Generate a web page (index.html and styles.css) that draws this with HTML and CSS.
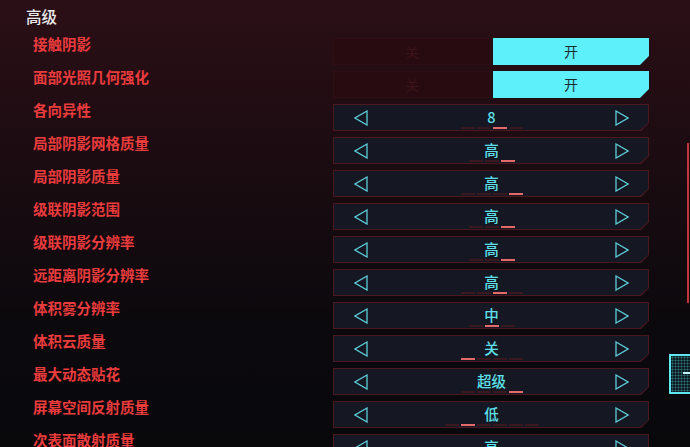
FILE: index.html
```html
<!DOCTYPE html>
<html lang="zh-CN">
<head>
<meta charset="utf-8">
<link rel="stylesheet" href="styles.css">
</head>
<body>
<div class="page">
  <h1 class="title">高级</h1>
  <div class="rows">
    <div class="row">
      <div class="label">接触阴影</div>
      <div class="toggle"><div class="off">关</div><div class="on">开</div></div>
    </div>
    <div class="row">
      <div class="label">面部光照几何强化</div>
      <div class="toggle"><div class="off">关</div><div class="on">开</div></div>
    </div>
    <div class="row">
      <div class="label">各向异性</div>
      <div class="sel"><div class="sel-in">
        <svg class="arr" viewBox="0 0 14 16"><polygon points="13,1 1,8 13,15" /></svg>
        <div class="mid"><div class="val">8</div><div class="bar"><i></i><i></i><i class="on"></i><i></i></div></div>
        <svg class="arr" viewBox="0 0 14 16"><polygon points="1,1 13,8 1,15" /></svg>
      </div></div>
    </div>
    <div class="row">
      <div class="label">局部阴影网格质量</div>
      <div class="sel"><div class="sel-in">
        <svg class="arr" viewBox="0 0 14 16"><polygon points="13,1 1,8 13,15" /></svg>
        <div class="mid"><div class="val">高</div><div class="bar"><i></i><i></i><i class="on"></i></div></div>
        <svg class="arr" viewBox="0 0 14 16"><polygon points="1,1 13,8 1,15" /></svg>
      </div></div>
    </div>
    <div class="row">
      <div class="label">局部阴影质量</div>
      <div class="sel"><div class="sel-in">
        <svg class="arr" viewBox="0 0 14 16"><polygon points="13,1 1,8 13,15" /></svg>
        <div class="mid"><div class="val">高</div><div class="bar"><i></i><i></i><i></i><i class="on"></i></div></div>
        <svg class="arr" viewBox="0 0 14 16"><polygon points="1,1 13,8 1,15" /></svg>
      </div></div>
    </div>
    <div class="row">
      <div class="label">级联阴影范围</div>
      <div class="sel"><div class="sel-in">
        <svg class="arr" viewBox="0 0 14 16"><polygon points="13,1 1,8 13,15" /></svg>
        <div class="mid"><div class="val">高</div><div class="bar"><i></i><i></i><i class="on"></i></div></div>
        <svg class="arr" viewBox="0 0 14 16"><polygon points="1,1 13,8 1,15" /></svg>
      </div></div>
    </div>
    <div class="row">
      <div class="label">级联阴影分辨率</div>
      <div class="sel"><div class="sel-in">
        <svg class="arr" viewBox="0 0 14 16"><polygon points="13,1 1,8 13,15" /></svg>
        <div class="mid"><div class="val">高</div><div class="bar"><i></i><i></i><i class="on"></i></div></div>
        <svg class="arr" viewBox="0 0 14 16"><polygon points="1,1 13,8 1,15" /></svg>
      </div></div>
    </div>
    <div class="row">
      <div class="label">远距离阴影分辨率</div>
      <div class="sel"><div class="sel-in">
        <svg class="arr" viewBox="0 0 14 16"><polygon points="13,1 1,8 13,15" /></svg>
        <div class="mid"><div class="val">高</div><div class="bar"><i></i><i></i><i class="on"></i><i></i></div></div>
        <svg class="arr" viewBox="0 0 14 16"><polygon points="1,1 13,8 1,15" /></svg>
      </div></div>
    </div>
    <div class="row">
      <div class="label">体积雾分辨率</div>
      <div class="sel"><div class="sel-in">
        <svg class="arr" viewBox="0 0 14 16"><polygon points="13,1 1,8 13,15" /></svg>
        <div class="mid"><div class="val">中</div><div class="bar"><i></i><i class="on"></i><i></i></div></div>
        <svg class="arr" viewBox="0 0 14 16"><polygon points="1,1 13,8 1,15" /></svg>
      </div></div>
    </div>
    <div class="row">
      <div class="label">体积云质量</div>
      <div class="sel"><div class="sel-in">
        <svg class="arr" viewBox="0 0 14 16"><polygon points="13,1 1,8 13,15" /></svg>
        <div class="mid"><div class="val">关</div><div class="bar"><i class="on"></i><i></i><i></i><i></i></div></div>
        <svg class="arr" viewBox="0 0 14 16"><polygon points="1,1 13,8 1,15" /></svg>
      </div></div>
    </div>
    <div class="row">
      <div class="label">最大动态贴花</div>
      <div class="sel"><div class="sel-in">
        <svg class="arr" viewBox="0 0 14 16"><polygon points="13,1 1,8 13,15" /></svg>
        <div class="mid"><div class="val">超级</div><div class="bar"><i></i><i></i><i></i><i class="on"></i></div></div>
        <svg class="arr" viewBox="0 0 14 16"><polygon points="1,1 13,8 1,15" /></svg>
      </div></div>
    </div>
    <div class="row">
      <div class="label">屏幕空间反射质量</div>
      <div class="sel"><div class="sel-in">
        <svg class="arr" viewBox="0 0 14 16"><polygon points="13,1 1,8 13,15" /></svg>
        <div class="mid"><div class="val">低</div><div class="bar"><i></i><i class="on"></i><i></i><i></i><i></i><i></i></div></div>
        <svg class="arr" viewBox="0 0 14 16"><polygon points="1,1 13,8 1,15" /></svg>
      </div></div>
    </div>
    <div class="row">
      <div class="label">次表面散射质量</div>
      <div class="sel"><div class="sel-in">
        <svg class="arr" viewBox="0 0 14 16"><polygon points="13,1 1,8 13,15" /></svg>
        <div class="mid"><div class="val">高</div><div class="bar"><i></i><i></i><i class="on"></i></div></div>
        <svg class="arr" viewBox="0 0 14 16"><polygon points="1,1 13,8 1,15" /></svg>
      </div></div>
    </div>
  </div>
  <div class="edge-line"></div>
  <div class="edge-box"><span></span></div>
</div>
</body>
</html>
```
FILE: styles.css
```css
html, body {
  margin: 0;
  padding: 0;
  height: 100%;
  overflow: hidden;
}
body {
  background: linear-gradient(180deg, #2b0f16 0%, #220d13 20%, #170b10 45%, #0c090d 70%, #08080b 100%);
  font-family: "Noto Sans CJK SC", "Noto Sans", sans-serif;
}
.page {
  position: relative;
  width: 690px;
  height: 447px;
  overflow: hidden;
}
.title {
  margin: 0;
  padding: 6px 0 0 26px;
  height: 28px;
  box-sizing: border-box;
  font-size: 15.5px;
  line-height: 20px;
  font-weight: 500;
  color: #ecebeb;
}
.rows {
  display: flex;
  flex-direction: column;
  padding-top: 6px;
}
.row {
  display: flex;
  height: 33px;
  flex-shrink: 0;
}
.label {
  width: 300px;
  padding-left: 33px;
  font-size: 14.5px;
  line-height: 20px;
  font-weight: 600;
  color: #ea3b3d;
}
.toggle {
  display: flex;
  width: 316px;
  height: 27px;
  margin-top: 4px;
  gap: 2px;
}
.toggle .off {
  flex: 1;
  background: #280b10;
  border: 1px solid #2f0f15;
  color: #3f1318;
  font-size: 13px;
  line-height: 25px;
  text-align: center;
}
.toggle .on {
  flex: 1;
  background: #5df0fb;
  color: #1c2a31;
  font-size: 14px;
  line-height: 27px;
  text-align: center;
  clip-path: polygon(0 0, 100% 0, 100% 18px, calc(100% - 9px) 100%, 0 100%);
}
.sel {
  width: 316px;
  height: 27px;
  margin-top: 4px;
  padding: 1px;
  box-sizing: border-box;
  background: #4b1820;
  clip-path: polygon(0 0, 100% 0, 100% 19px, calc(100% - 8px) 100%, 0 100%);
}
.sel-in {
  height: 100%;
  display: flex;
  align-items: center;
  justify-content: space-between;
  padding: 0 19px 0 20px;
  background: #151823;
  clip-path: polygon(0 0, 100% 0, 100% 18px, calc(100% - 8px) 100%, 0 100%);
}
.arr {
  width: 14px;
  height: 16px;
  fill: none;
  stroke: #5ccbd7;
  stroke-width: 1.3;
}
.mid {
  display: flex;
  flex-direction: column;
  align-items: center;
  padding-top: 2px;
}
.val {
  color: #5ee1ec;
  font-size: 14.5px;
  line-height: 18px;
  font-weight: 500;
}
.bar {
  display: flex;
  gap: 2px;
  margin-top: 1px;
  height: 2px;
}
.bar i {
  display: block;
  width: 14px;
  height: 2px;
  background: #3a1820;
}
.bar i.on {
  background: #e36a68;
}
.edge-line {
  position: absolute;
  left: 687px;
  top: 143px;
  width: 2px;
  height: 160px;
  background: #c3353d;
}
.edge-box {
  position: absolute;
  left: 669px;
  top: 354px;
  width: 30px;
  height: 40px;
  box-sizing: border-box;
  border: 2px solid #5fe6f0;
  background-color: #0e1c22;
  background-image: radial-gradient(circle, #2e6f78 0.8px, transparent 1.2px);
  background-size: 3px 3px;
}
.edge-box span {
  position: absolute;
  left: 12px;
  top: 16px;
  width: 10px;
  height: 2px;
  background: #bff6fa;
}
```
